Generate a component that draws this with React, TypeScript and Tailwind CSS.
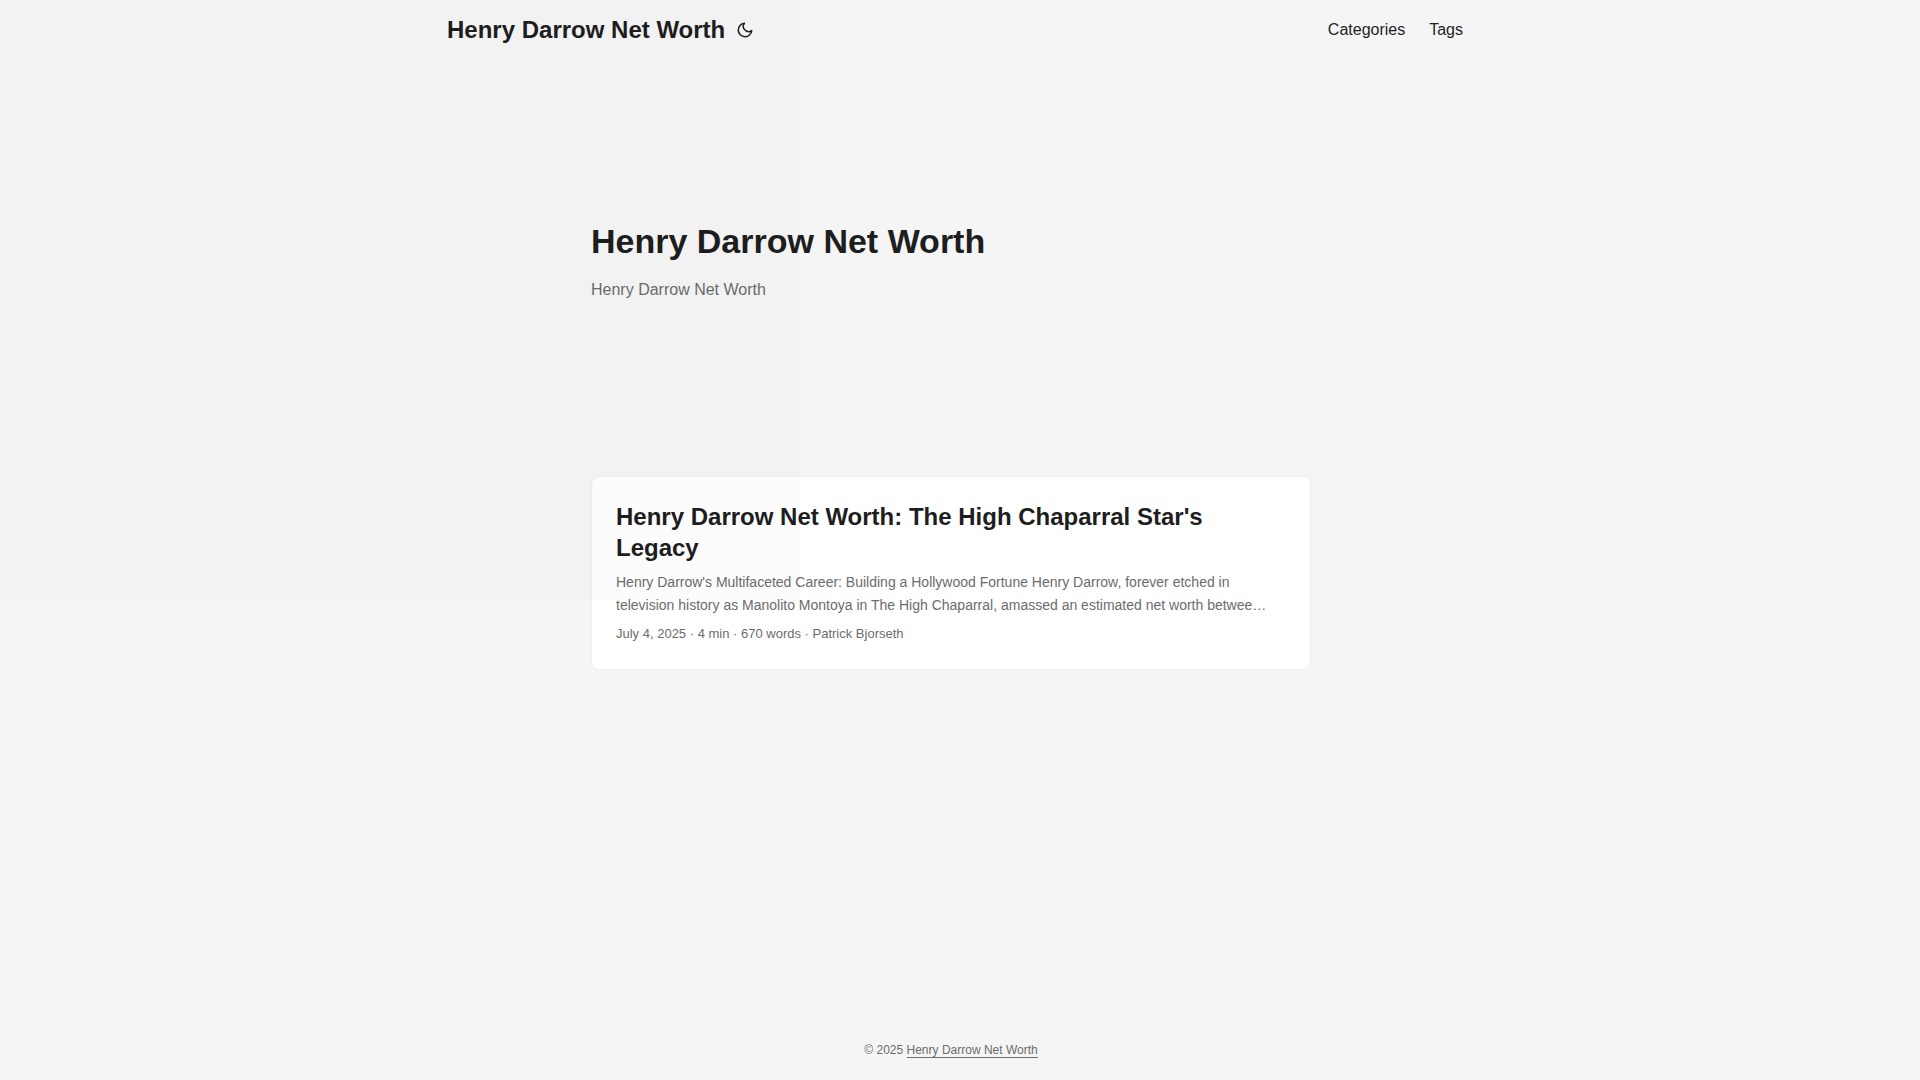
import { useState } from "react";

const SITE_NAME = "Henry Darrow Net Worth";

const menu = [
  { label: "Categories", href: "#categories" },
  { label: "Tags", href: "#tags" },
];

const post = {
  title: "Henry Darrow Net Worth: The High Chaparral Star's Legacy",
  summary:
    "Henry Darrow's Multifaceted Career: Building a Hollywood Fortune Henry Darrow, forever etched in television history as Manolito Montoya in The High Chaparral, amassed an estimated net worth betwee…",
  meta: ["July 4, 2025", "4 min", "670 words", "Patrick Bjorseth"],
};

function MoonIcon() {
  return (
    <svg
      width="18"
      height="18"
      viewBox="0 0 24 24"
      fill="none"
      stroke="currentColor"
      strokeWidth="2"
      strokeLinecap="round"
      strokeLinejoin="round"
      aria-hidden="true"
    >
      <path d="M21 12.79A9 9 0 1 1 11.21 3 7 7 0 0 0 21 12.79z" />
    </svg>
  );
}

function Header({ onToggle }: { onToggle: () => void }) {
  return (
    <header>
      <nav className="max-w-[1072px] h-[60px] mx-auto px-6 flex items-center justify-between">
        <div className="flex items-center gap-[11px] pl-2">
          <a href="#home" className="text-2xl font-bold">
            {SITE_NAME}
          </a>
          <button type="button" onClick={onToggle} aria-label="Toggle theme" className="cursor-pointer">
            <MoonIcon />
          </button>
        </div>

        <ul className="flex gap-6">
          {menu.map((item) => (
            <li key={item.label}>
              <a href={item.href} className="text-base">
                {item.label}
              </a>
            </li>
          ))}
        </ul>
      </nav>
    </header>
  );
}

function PostCard() {
  return (
    <article className="bg-white border border-[#eeeeee] rounded-lg p-6">
      <h2 className="text-2xl leading-[31px] font-bold">
        <a href="#post">{post.title}</a>
      </h2>
      <p className="my-2 text-sm leading-[23px] text-[#6c6c6c]">{post.summary}</p>
      <footer className="pb-0.5 text-[13px] leading-[18px] text-[#6c6c6c]">
        {post.meta.join(" · ")}
      </footer>
    </article>
  );
}

export default function App() {
  const [dark, setDark] = useState(false);

  return (
    <div
      className={`relative min-h-screen flex flex-col pr-[18px] font-['Liberation_Sans',Arial,sans-serif] ${
        dark ? "bg-[#1d1e20] text-[#dadadb] [&_article]:text-[#1e1e1e]" : "bg-[#f5f5f5] text-[#1e1e1e]"
      }`}
    >
      <Header onToggle={() => setDark(!dark)} />

      <main className="w-full max-w-[768px] mx-auto px-6 grow">
        <section className="min-h-[416px] flex flex-col justify-center">
          <h1 className="text-[34px] leading-[44px] font-bold">{SITE_NAME}</h1>
          <p className="my-3.5 text-base leading-[26px] text-[#6c6c6c]">{SITE_NAME}</p>
        </section>

        <PostCard />
      </main>

      <footer className="h-[60px] flex items-center justify-center text-xs text-[#6c6c6c]">
        <p>
          © 2025{" "}
          <a href="#home" className="border-b border-[#6c6c6c]">
            {SITE_NAME}
          </a>
        </p>
      </footer>

      {/* faint shade over the top left corner */}
      <div className="absolute top-0 left-0 w-[800px] h-[600px] bg-black/[0.012] pointer-events-none" />
    </div>
  );
}
